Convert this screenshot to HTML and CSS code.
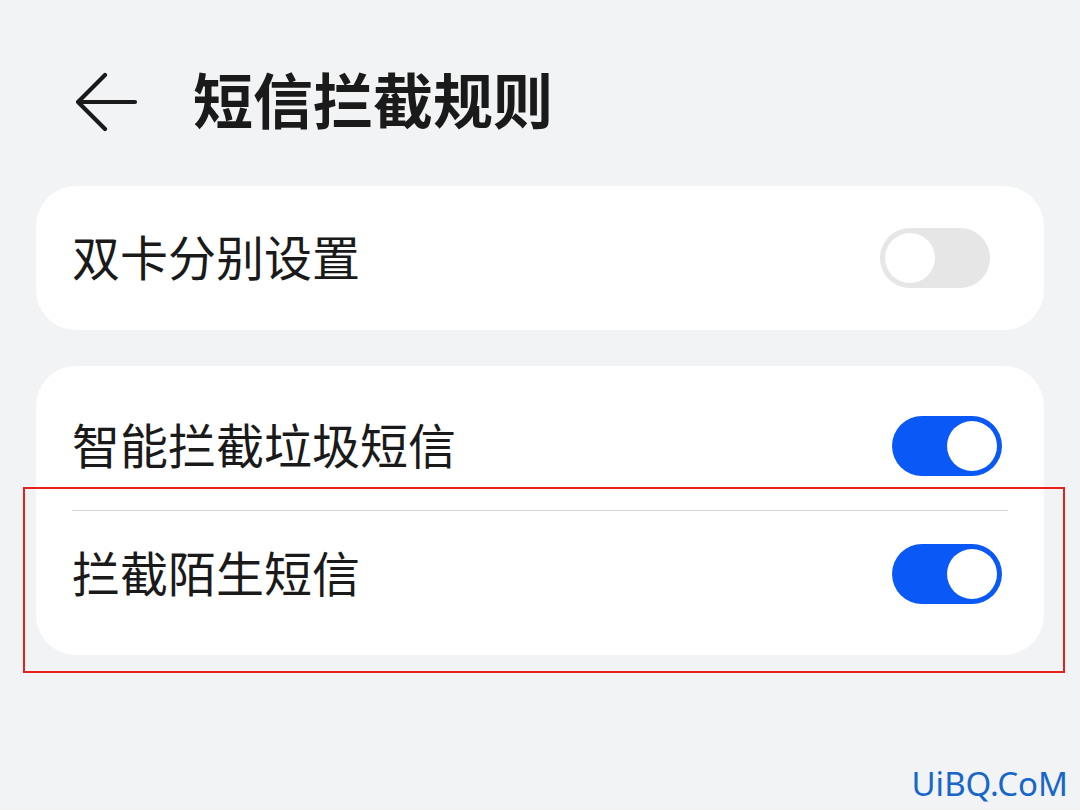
FILE: index.html
```html
<!DOCTYPE html>
<html lang="zh-CN">
<head>
<meta charset="utf-8">
<title>短信拦截规则</title>
<link rel="stylesheet" href="styles.css">
</head>
<body>
<div class="page">
  <header class="header">
    <svg class="back" width="62" height="62" viewBox="0 0 62 62" aria-hidden="true">
      <path d="M29 3 L2 30 L29 57 M2 30 L59 30" fill="none" stroke="#1a1a1a" stroke-width="4.2" stroke-linecap="round" stroke-linejoin="round"/>
    </svg>
    <h1 class="title">短信拦截规则</h1>
  </header>

  <section class="card card-single">
    <div class="row">
      <span class="label">双卡分别设置</span>
      <span class="switch switch-off"><span class="knob"></span></span>
    </div>
  </section>

  <section class="card card-group">
    <div class="row row-first">
      <span class="label">智能拦截垃圾短信</span>
      <span class="switch switch-on"><span class="knob"></span></span>
    </div>
    <div class="divider"></div>
    <div class="row row-last">
      <span class="label">拦截陌生短信</span>
      <span class="switch switch-on"><span class="knob"></span></span>
    </div>
  </section>

  <div class="highlight"></div>
  <div class="watermark">UiBQ.CoM</div>
</div>
</body>
</html>
```

FILE: styles.css
```css
html, body {
  margin: 0;
  padding: 0;
}
body {
  background: #f1f3f5;
  font-family: "Noto Sans CJK SC", "Noto Sans", sans-serif;
  color: #1a1a1a;
}
.page {
  position: relative;
  width: 1080px;
  height: 810px;
  overflow: hidden;
}
.header {
  display: flex;
  align-items: center;
  box-sizing: border-box;
  height: 186px;
  padding: 20px 0 0 76px;
}
.back {
  display: block;
  flex: none;
}
.title {
  margin: 0 0 10px 55px;
  font-size: 60px;
  font-weight: 700;
  line-height: 1;
  letter-spacing: 0;
  color: #1a1a1a;
}
.card {
  margin: 0 36px;
  background: #ffffff;
  border-radius: 40px;
}
.card-single {
  height: 144px;
  display: flex;
  flex-direction: column;
}
.card-single .row {
  flex: 1;
  padding-right: 54px;
}
.card-group {
  margin-top: 36px;
  padding: 16px 0 18px;
}
.row {
  display: flex;
  align-items: center;
  justify-content: space-between;
  padding: 0 42px 0 36px;
}
.row-first {
  height: 128px;
}
.row-last {
  height: 126px;
}
.label {
  font-size: 48px;
  line-height: 1;
  font-weight: 400;
  color: #1a1a1a;
  padding-bottom: 7px;
}
.divider {
  height: 1px;
  margin: 0 36px;
  background: #d6d6d6;
}
.switch {
  position: relative;
  width: 110px;
  height: 60px;
  border-radius: 30px;
  flex: none;
}
.switch-off {
  background: #e6e6e6;
}
.switch-on {
  background: #0a59f7;
}
.knob {
  position: absolute;
  top: 5px;
  width: 50px;
  height: 50px;
  border-radius: 50%;
  background: #ffffff;
}
.switch-off .knob {
  left: 5px;
}
.switch-on .knob {
  right: 5px;
}
.highlight {
  position: absolute;
  left: 23px;
  top: 487px;
  width: 1042px;
  height: 186px;
  box-sizing: border-box;
  border: 2px solid #e8201c;
}
.watermark {
  position: absolute;
  right: 12px;
  bottom: 6px;
  font-family: "Noto Sans", "Open Sans", sans-serif;
  font-size: 33px;
  line-height: 1.2;
  color: #1766c9;
}
```
